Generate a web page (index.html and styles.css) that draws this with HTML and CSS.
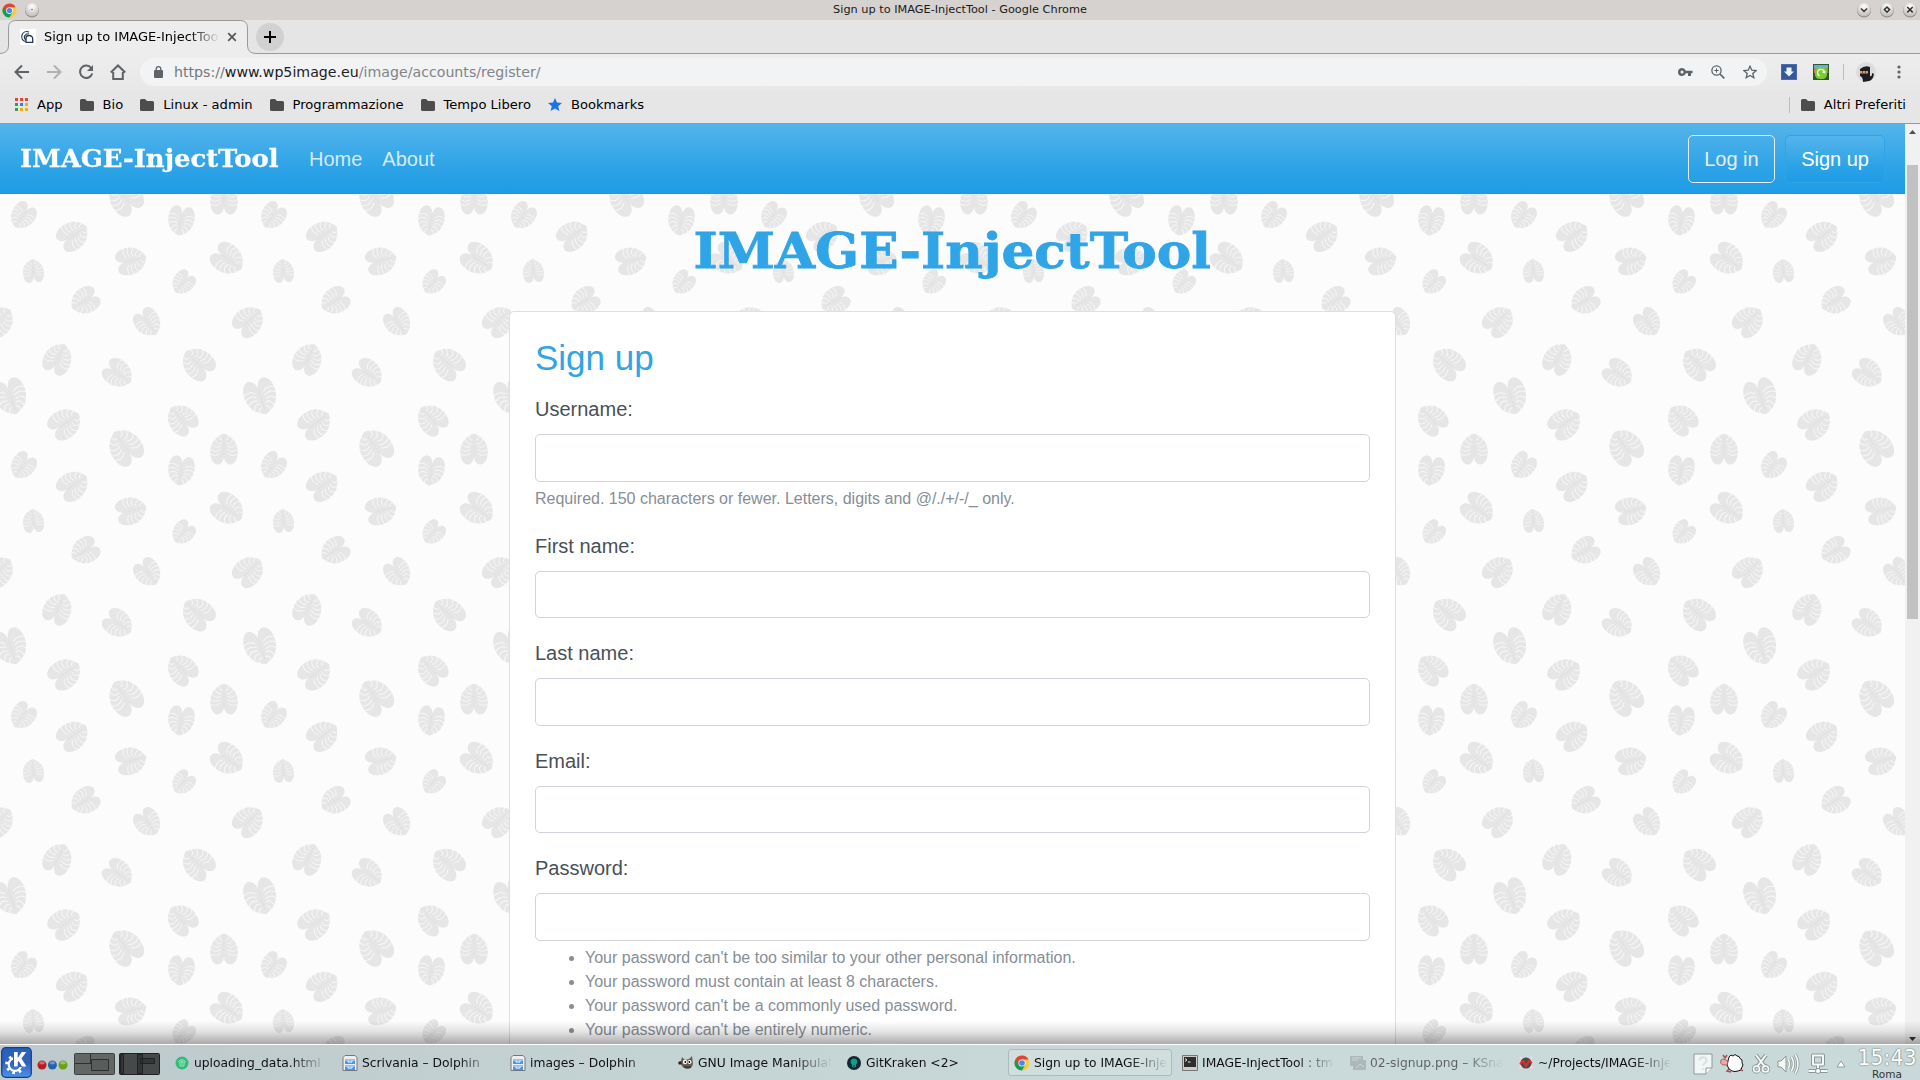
FILE: index.html
```html
<!DOCTYPE html>
<html lang="en">
<head>
<meta charset="utf-8">
<title>Sign up to IMAGE-InjectTool</title>
<link rel="stylesheet" href="styles.css">
</head>
<body>
<svg class="defs" width="0" height="0" aria-hidden="true">
  <defs>
    <symbol id="chrome" viewBox="0 0 16 16">
      <circle cx="8" cy="8" r="7.5" fill="#fbca3e"/>
      <path d="M8 8 1.5 4.25A7.5 7.5 0 0 0 8 15.5L11.2 9.9Z" fill="#169b58"/>
      <path d="M8 8 4.7 9.8 1.5 4.25A7.5 7.5 0 0 1 14.6 4.4H8Z" fill="#e0453a"/>
      <circle cx="8" cy="8" r="3.6" fill="#f4f4f4"/><circle cx="8" cy="8" r="2.8" fill="#4788f0"/>
    </symbol>
    <symbol id="folder" viewBox="0 0 14 12"><path d="M0 1.5Q0 0 1.5 0H5l2 2h5.500Q14 2 14 3.500V10.500Q14 12 12.500 12H1.500Q0 12 0 10.500Z" fill="#4d4d4d"/></symbol>
    <symbol id="cabinet" viewBox="0 0 16 16">
      <path d="M3 .5h10l2 2v13H1v-13Z" fill="#eee" stroke="#777"/>
      <path d="M3 4h10v5H3zM3 10h10v5H3z" fill="#4d95e8"/><path d="M3 4h10v2H3zM3 10h10v2H3z" fill="#8fc2f8"/>
      <path d="M6 5.500v1.500h4V5.500M6 11.500v1.500h4v-1.500" fill="none" stroke="#fff"/>
    </symbol>
    <radialGradient id="knob" cx=".5" cy=".25" r=".8"><stop offset="0" stop-color="#fff"/><stop offset="1" stop-color="#b9b6b3"/></radialGradient>
    <linearGradient id="kde" x2="0" y2="1"><stop offset="0" stop-color="#2a5fb8"/><stop offset=".5" stop-color="#2e62bd"/><stop offset="1" stop-color="#4c93ea"/></linearGradient>
    <symbol id="leaf" viewBox="-17 -17 34 34">
      <path d="M0-7C0-10-1.500-14-5-15.300C-9-16.500-12-13-13.200-9C-15-3-14 3-11 8C-8.500 12-4 14.500 0 16C4 14.500 8.500 12 11 8C14 3 15-3 13.200-9C12-13 9-16.500 5-15.300C1.500-14 0-10 0-7Z" fill="#e6e6e6"/>
      <g fill="none" stroke="#f8f8f8" stroke-width=".9" stroke-linecap="round">
        <path d="M-14-5Q-8-8-4-4M-14 0Q-9-4-4-.5M-12.500 5.500Q-9 0-4 3M-9 10.500Q-7 4-3 6M-5 14Q-5 9-2 9.500M14-5Q8-8 4-4M14 0Q9-4 4-.5M12.500 5.500Q9 0 4 3M9 10.500Q7 4 3 6M5 14Q5 9 2 9.500"/>
      </g>
      <path d="M0-7V12" stroke="#dedede" stroke-width=".7"/>
    </symbol>
    <pattern id="leaves" width="250" height="250" patternUnits="userSpaceOnUse">
      <use href="#leaf" x="-17" y="-17" width="34" height="34" transform="translate(22.700 22) rotate(35) scale(.86)"/>
      <use href="#leaf" x="-17" y="-17" width="34" height="34" transform="translate(73.300 41.300) rotate(-125) scale(1)"/>
      <use href="#leaf" x="-17" y="-17" width="34" height="34" transform="translate(125 252.700) rotate(145) scale(1.150)"/>
      <use href="#leaf" x="-17" y="-17" width="34" height="34" transform="translate(125 2.700) rotate(145) scale(1.150)"/>
      <use href="#leaf" x="-17" y="-17" width="34" height="34" transform="translate(181 26.700) rotate(10) scale(.94)"/>
      <use href="#leaf" x="-17" y="-17" width="34" height="34" transform="translate(224 255.300) rotate(180) scale(.98)"/>
      <use href="#leaf" x="-17" y="-17" width="34" height="34" transform="translate(224 5.300) rotate(180) scale(.98)"/>
      <use href="#leaf" x="-17" y="-17" width="34" height="34" transform="translate(33.300 77) rotate(175) scale(.75)"/>
      <use href="#leaf" x="-17" y="-17" width="34" height="34" transform="translate(131.300 66.700) rotate(-105) scale(.97)"/>
      <use href="#leaf" x="-17" y="-17" width="34" height="34" transform="translate(228 65.300) rotate(-55) scale(1.050)"/>
      <use href="#leaf" x="-17" y="-17" width="34" height="34" transform="translate(183 88.700) rotate(40) scale(.77)"/>
      <use href="#leaf" x="-17" y="-17" width="34" height="34" transform="translate(84.700 107) rotate(60) scale(.92)"/>
      <use href="#leaf" x="-17" y="-17" width="34" height="34" transform="translate(148 128.700) rotate(-35) scale(.9)"/>
      <use href="#leaf" x="-17" y="-17" width="34" height="34" transform="translate(249 127) rotate(-135) scale(1)"/>
      <use href="#leaf" x="-17" y="-17" width="34" height="34" transform="translate(-1 127) rotate(-135) scale(1)"/>
      <use href="#leaf" x="-17" y="-17" width="34" height="34" transform="translate(58 164.700) rotate(-155) scale(.99)"/>
      <use href="#leaf" x="-17" y="-17" width="34" height="34" transform="translate(118.300 179.700) rotate(-55) scale(.95)"/>
      <use href="#leaf" x="-17" y="-17" width="34" height="34" transform="translate(197.700 169.300) rotate(133) scale(1.060)"/>
      <use href="#leaf" x="-17" y="-17" width="34" height="34" transform="translate(260.700 202.700) rotate(-18) scale(1.140)"/>
      <use href="#leaf" x="-17" y="-17" width="34" height="34" transform="translate(10.700 202.700) rotate(-18) scale(1.140)"/>
      <use href="#leaf" x="-17" y="-17" width="34" height="34" transform="translate(65.300 229.300) rotate(-125) scale(1.040)"/>
      <use href="#leaf" x="-17" y="-17" width="34" height="34" transform="translate(181.700 225.300) rotate(138) scale(1)"/>
    </pattern>
  </defs>
</svg>

<header class="titlebar">
  <div class="title-icons">
    <svg width="15" height="15"><use href="#chrome"/></svg>
    <svg width="16" height="16" viewBox="0 0 16 16"><circle cx="8" cy="8.500" r="7" fill="#8c8987"/><circle cx="8" cy="7.800" r="6.800" fill="url(#knob)"/><circle cx="8" cy="7.500" r=".8" fill="#777"/></svg>
  </div>
  <span class="window-title">Sign up to IMAGE-InjectTool - Google Chrome</span>
  <div class="window-buttons">
    <svg width="16" height="16" viewBox="0 0 16 16"><circle cx="8" cy="8.500" r="7" fill="#8c8987"/><circle cx="8" cy="7.800" r="6.800" fill="url(#knob)"/><path d="m5 6.500 3 3 3-3" class="glyph"/></svg>
    <svg width="16" height="16" viewBox="0 0 16 16"><circle cx="8" cy="8.500" r="7" fill="#8c8987"/><circle cx="8" cy="7.800" r="6.800" fill="url(#knob)"/><path d="m8 5 2.600 2.600L8 10.200 5.400 7.600Z" class="glyph"/></svg>
    <svg width="16" height="16" viewBox="0 0 16 16"><circle cx="8" cy="8.500" r="7" fill="#8c8987"/><circle cx="8" cy="7.800" r="6.800" fill="url(#knob)"/><path d="m5.300 5 5.400 5.400M10.700 5l-5.400 5.400" class="glyph"/></svg>
  </div>
</header>

<div class="tabstrip">
  <svg class="tab-shape" width="1920" height="34" viewBox="0 0 1920 34"><path d="M0 33.500Q8.500 33 8.500 26V8Q8.500 .5 16 .5H240Q247.500 .5 247.500 8V26Q248 33.500 256 33.500H1920V35H0Z" fill="#ededed" stroke="#9a9a9a"/></svg>
  <div class="tab">
    <svg width="16" height="16" viewBox="0 0 16 16"><path fill="#fff" d="M0 0h16v16H0z"/><g fill="none" stroke="#26365a"><path d="M5.500 12.500C2.500 12 1 9 2 6 3 3 6 2 9 3M6 11C2.500 8 5 4.500 9 4.800" stroke-width="1.100"/><path d="M6 13.300V9Q6 6.500 9 6.500 12.700 6.500 12.700 10V13.300Z" stroke-width="1.300"/></g></svg>
    <span class="tab-text">Sign up to IMAGE-InjectTool</span>
    <svg width="10" height="10" viewBox="0 0 10 10"><path d="m1.200 1.200 7.600 7.600M8.800 1.200 1.200 8.800" stroke="#555" stroke-width="1.700"/></svg>
  </div>
  <div class="newtab"><svg width="12" height="12" viewBox="0 0 12 12"><path d="M6 0v12M0 6h12" stroke="#000" stroke-width="2"/></svg></div>
</div>

<div class="toolbar">
  <div class="nav-icons">
    <svg width="16" height="16" viewBox="0 0 16 16" class="line"><path d="M15 8H2M8 1.500 1.500 8 8 14.500"/></svg>
    <svg width="16" height="16" viewBox="0 0 16 16" class="line dim"><path d="M1 8H14M8 1.500 14.500 8 8 14.500"/></svg>
    <svg width="16" height="16" viewBox="0 0 16 16" class="line"><path d="M13.200 4A6.200 6.200 0 1 0 14.200 9.500"/><path d="M15 1v6H9Z" fill="#5f6368" stroke="none"/></svg>
    <svg width="16" height="16" viewBox="0 0 16 16" class="line"><path d="M.8 8.500 8 1.500l7.200 7M3.200 8v7h9.600V8"/></svg>
  </div>
  <div class="omnibox">
    <svg width="9" height="12" viewBox="0 0 9 12"><path d="M2.200 5V3a2.300 2.300 0 0 1 4.600 0v2" fill="none" stroke="#5f6368" stroke-width="1.300"/><rect y="4" width="9" height="8" rx="1" fill="#5f6368"/></svg>
    <span class="url"><span>https://</span><b>www.wp5image.eu</b><i>/image/accounts/register/</i></span>
    <div class="omni-icons">
      <svg width="15" height="10" viewBox="0 0 15 10"><path d="M4 1a4 4 0 1 0 3.800 5.300H10V9h3V6.300h1.500V3.700H7.800A4 4 0 0 0 4 1Zm0 2.500a1.500 1.500 0 1 1 0 3 1.500 1.500 0 0 1 0-3Z" fill="#5f6368" fill-rule="evenodd"/></svg>
      <svg width="14" height="14" viewBox="0 0 14 14" fill="none" stroke="#5f6368" stroke-width="1.300"><circle cx="5.500" cy="5.500" r="4.600"/><path d="M9 9l4.300 4.300" stroke-width="1.700"/><path d="M5.500 3.300v4.400M3.300 5.500h4.400" stroke-width="1"/></svg>
      <svg width="14" height="14" viewBox="0 0 14 14"><path d="m7 1.200 1.800 4 4.300.4-3.300 2.900 1 4.200L7 10.500l-3.800 2.200 1-4.200L.9 5.600l4.300-.4Z" fill="none" stroke="#5f6368" stroke-width="1.300"/></svg>
    </div>
  </div>
  <div class="extensions">
    <svg width="16" height="16" viewBox="0 0 16 16"><rect x=".5" y=".5" width="15" height="15" fill="#35589b" stroke="#4b6cab"/><path d="M5.500 3.500h5v4H13l-5 5-5-5h2.500Z" fill="#eef2f9"/></svg>
    <svg width="16" height="16" viewBox="0 0 16 16"><rect width="16" height="16" fill="#2c5a29"/><path fill="#5fb3e0" d="M1 1h14v3H1z"/><path fill="#bf7860" d="M1 4h4v5H1zM11 4h4v5h-4z"/><rect x="2" y="3" width="12" height="12" rx="4.500" fill="#7ccb32"/><path d="M6.500 12A3.500 3.500 0 1 1 11.500 8.500L9.500 8M11.500 8.500 12 6.800" fill="none" stroke="#e9ffd7" stroke-width="1.500"/></svg>
  </div>
  <span class="rule"></span>
  <svg class="avatar" width="20" height="20" viewBox="0 0 20 20"><circle cx="10" cy="10" r="10" fill="#dcdcdc"/><path d="M4 7Q9 3 14 5V14Q16 15 16 11L18 12Q17 18 13 19L7 20Q7 15 4 14Z" fill="#1c1d20"/><path d="M4 9h8v2.500H4z" fill="#d99a6c"/><path d="M6 10h1M9 10h1" stroke="#111"/></svg>
  <svg class="menu" width="4" height="14" viewBox="0 0 4 14" fill="#5f6368"><circle cx="2" cy="2" r="1.600"/><circle cx="2" cy="7" r="1.600"/><circle cx="2" cy="12" r="1.600"/></svg>
</div>

<nav class="bookmarks">
  <span class="bm app"><svg width="13" height="13" viewBox="0 0 13 13"><path d="M0 0h3v3H0zM5 0h3v3H5zM10 0h3v3h-3z" fill="#ea4335"/><path d="M0 5h3v3H0zM0 10h3v3H0z" fill="#349d55"/><path d="M5 5h3v3H5z" fill="#2385f5"/><path d="M10 5h3v3h-3zM5 10h3v3H5zM10 10h3v3h-3z" fill="#f5ad0c"/></svg>App</span>
  <span class="bm"><svg width="14" height="12"><use href="#folder"/></svg>Bio</span>
  <span class="bm"><svg width="14" height="12"><use href="#folder"/></svg>Linux - admin</span>
  <span class="bm"><svg width="14" height="12"><use href="#folder"/></svg>Programmazione</span>
  <span class="bm"><svg width="14" height="12"><use href="#folder"/></svg>Tempo Libero</span>
  <span class="bm"><svg width="14" height="13" viewBox="0 0 14 13"><path d="m7 0 2 4.600 5 .4-3.800 3.300L11.400 13 7 10.500 2.600 13l1.200-4.700L0 5l5-.4Z" fill="#1a73e8"/></svg>Bookmarks</span>
  <span class="rule other"></span>
  <span class="bm"><svg width="14" height="12"><use href="#folder"/></svg>Altri Preferiti</span>
</nav>

<div class="viewport">
  <main class="page">
    <div class="navbar">
      <span class="brand"><span>IMAGE-InjectTool</span></span>
      <a class="nav-link">Home</a>
      <a class="nav-link">About</a>
      <a class="btn btn-outline">Log in</a>
      <a class="btn btn-primary">Sign up</a>
    </div>
    <div class="content">
      <svg class="backdrop" width="100%" height="100%" aria-hidden="true"><rect width="100%" height="100%" fill="url(#leaves)"/></svg>
      <h1 class="site-title"><span>IMAGE-InjectTool</span></h1>
      <form class="card">
        <h2>Sign up</h2>
        <div class="group"><label for="u">Username:</label><input id="u"><small>Required. 150 characters or fewer. Letters, digits and @/./+/-/_ only.</small></div>
        <div class="group"><label for="f">First name:</label><input id="f"></div>
        <div class="group"><label for="l">Last name:</label><input id="l"></div>
        <div class="group"><label for="e">Email:</label><input id="e"></div>
        <div class="group"><label for="p">Password:</label><input id="p">
          <ul>
            <li>Your password can't be too similar to your other personal information.</li>
            <li>Your password must contain at least 8 characters.</li>
            <li>Your password can't be a commonly used password.</li>
            <li>Your password can't be entirely numeric.</li>
          </ul>
        </div>
      </form>
    </div>
  </main>
  <aside class="scrollbar">
    <svg width="7" height="4" viewBox="0 0 7 4"><path d="M0 4 3.500 0 7 4Z" fill="#505050"/></svg>
    <span class="thumb"></span>
    <svg class="down" width="7" height="4" viewBox="0 0 7 4"><path d="M0 0h7L3.500 4Z" fill="#333"/></svg>
  </aside>
  <div class="panel-shadow"></div>
</div>

<footer class="taskbar">
  <svg class="kmenu" width="31" height="31" viewBox="0 0 31 31"><rect x=".7" y=".7" width="29.600" height="29.600" rx="4" fill="url(#kde)" stroke="#163c86" stroke-width="1.200"/><circle cx="14" cy="17.500" r="8.300" fill="none" stroke="#fff" stroke-width="3" stroke-dasharray="2.600 3.920"/><circle cx="14" cy="17.500" r="6.300" fill="none" stroke="#fff" stroke-width="2.200"/><path d="M12 4h14v16H12z" fill="#2e62bd"/><path d="M13 5h3.700v6l4-6h4.500l-4.700 6.500 5 8h-4.600l-3.200-5.500-1 1.300v4.200H13Z" fill="#fff"/></svg>
  <svg class="dots" width="31" height="10" viewBox="0 0 31 10"><circle cx="5" cy="5" r="4.500" fill="#b91f22"/><circle cx="15.400" cy="5" r="4.500" fill="#2561ae"/><circle cx="26" cy="5" r="4.500" fill="#69a11b"/><g fill="#fff" opacity=".35"><ellipse cx="5" cy="2.800" rx="2.800" ry="1.600"/><ellipse cx="15.400" cy="2.800" rx="2.800" ry="1.600"/><ellipse cx="26" cy="2.800" rx="2.800" ry="1.600"/></g></svg>
  <svg class="pager" width="86" height="22" viewBox="0 0 86 22"><g stroke="#3c403f"><rect x=".5" y=".5" width="40" height="21" rx="1" fill="#626766"/><path d="M1 10.500h16M16.500 1v9.500M17.500 6.500h17v11h-17Z" fill="#585d5c" stroke="#2d3030"/></g><g stroke="#202222"><rect x="45.500" y=".5" width="40" height="21" rx="1" fill="#464949"/><path d="M46.500 1.500h3v19h-3zM63.500 1.500h5v19h-5zM66.500 5.500h14v5h-14z" fill="#333636"/></g></svg>
  <div class="tasks">
    <div class="task"><svg width="16" height="16" viewBox="0 0 16 16"><circle cx="8" cy="8" r="6.500" fill="#32bb79"/><path d="M4.500 6.500Q8 3 11.500 6.500L10 8v3H6V8ZM6 7h4M8 5v5" fill="none" stroke="#a5e3c2"/></svg><span>uploading_data.html</span></div>
    <div class="task"><svg width="16" height="16"><use href="#cabinet"/></svg><span>Scrivania – Dolphin</span></div>
    <div class="task"><svg width="16" height="16"><use href="#cabinet"/></svg><span>images – Dolphin</span></div>
    <div class="task"><svg width="16" height="16" viewBox="0 0 16 16"><path d="M3 6 4 2l3 3 4-1 3-3 1 8Q14 14 9 14 4 13 3 9L0 8Z" fill="#675e51"/><circle cx="7" cy="7" r="2.200" fill="#fff"/><circle cx="11.500" cy="7" r="2" fill="#fff"/><circle cx="7.300" cy="7" r=".9"/><circle cx="11.300" cy="7" r=".9"/><path d="M6 12h7" stroke="#3b332c" stroke-width="1.500"/><circle cx="2" cy="8" r="1.700" fill="#262626"/></svg><span>GNU Image Manipulation</span></div>
    <div class="task"><svg width="16" height="16" viewBox="0 0 16 16"><circle cx="8" cy="8" r="7" fill="#142832"/><path d="M8 3.500c3 0 4 3 3 5l-1 .8V12H9V10H8.500v3h-1v-3H7v2H6V9.300l-1-.8c-1-2 0-5 3-5Z" fill="#149b8f"/></svg><span>GitKraken &lt;2&gt;</span></div>
    <div class="task active"><svg width="16" height="16"><use href="#chrome"/></svg><span>Sign up to IMAGE-InjectTool</span></div>
    <div class="task"><svg width="16" height="16" viewBox="0 0 16 16"><path d="M.5.5h15v15H.5z" fill="#ccc" stroke="#777"/><path d="M2 2h12v10H2z" fill="#2e2e2e"/><path d="m3 3.500 2 1.500-2 1.500M6 7h2.500" fill="none" stroke="#eee"/></svg><span>IMAGE-InjectTool : tmux</span></div>
    <div class="task faded"><svg width="16" height="16" viewBox="0 0 16 16"><path d="M0 1h13v4h3v10H3v-4H0Z" fill="#9aa4a4"/><path d="M2 3h9M2 5h6M6 13l4-4 4 3" fill="none" stroke="#cbd5d5"/></svg><span>02-signup.png – KSnapshot</span></div>
    <div class="task"><svg width="16" height="16" viewBox="0 0 16 16"><path d="m2 2 3 3M14 2l-3 3M1 13l3-2M15 13l-3-2" stroke="#f3dada" stroke-width="2"/><circle cx="8" cy="8" r="5.500" fill="#4b4b4b"/><path d="m2 9 3-3 3 5 3-5 3 2" fill="none" stroke="#e52a2e" stroke-width="2"/></svg><span>~/Projects/IMAGE-InjectTool</span></div>
  </div>
  <div class="tray">
    <svg width="20" height="24" viewBox="0 0 20 24"><path d="M1 2h18v14l-6 6H1Z" fill="#f3f6f6" stroke="#8f9a9a"/><path d="M19 16h-6v6" fill="#fff" stroke="#8f9a9a"/><path d="M6.500 8.500c0-4 7-4 7 0 0 3-3.500 2.500-3.500 5.500M10 16v2" fill="none" stroke="#dde3e3" stroke-width="2.300"/></svg>
    <svg width="25" height="20" viewBox="0 0 25 20"><path d="m9 3 2-2 2 1 2-1.500L17 2l2 .5 1 2 2 1.500v3l1 2-1 2-1 3-3 1-3 .5-3-.5-3-2-2-4Z" fill="#fff" stroke="#111" stroke-width="1"/><path d="m1 6 2-1 3 1 2 2-1 3H3L.5 9Z" fill="#efaaa5" stroke="#8e3f3f" stroke-width=".7"/><path d="M3 1 5 4 7 1M9 15l-2 2 4 1M20 15l3 2" fill="none" stroke="#ae4e4d" stroke-width="1.500"/></svg>
    <svg width="18" height="21" viewBox="0 0 18 21"><g fill="none"><path d="M4 2 13 14M14 2 5 14" stroke="#8b9797" stroke-width="4"/><circle cx="4.500" cy="16" r="3" stroke="#8b9797" stroke-width="3.500"/><circle cx="13.500" cy="16" r="3" stroke="#8b9797" stroke-width="3.500"/><path d="M4 2 13 14M14 2 5 14" stroke="#f7f9f9" stroke-width="2"/><circle cx="4.500" cy="16" r="3" stroke="#f7f9f9" stroke-width="1.700"/><circle cx="13.500" cy="16" r="3" stroke="#f7f9f9" stroke-width="1.700"/></g></svg>
    <svg width="23" height="24" viewBox="0 0 23 24"><path d="M1 9h3l5-5v16l-5-5H1Z" fill="#f8fafa" stroke="#8b9797"/><g fill="none"><path d="M11.500 8q2 4 0 8M14.500 5q4 7 0 14M18 2q6 10 0 20" stroke="#8b9797" stroke-width="3.200"/><path d="M11.500 8q2 4 0 8M14.500 5q4 7 0 14M18 2q6 10 0 20" stroke="#f7f9f9" stroke-width="1.600"/></g></svg>
    <svg width="22" height="22" viewBox="0 0 22 22"><g fill="none" stroke-linejoin="round"><path d="M6 2.500h10v9H6ZM11 12v5M1.500 18h19" stroke="#8b9797" stroke-width="4"/><path d="M6 2.500h10v9H6ZM11 12v5M1.500 18h19" stroke="#f7f9f9" stroke-width="2"/></g><circle cx="11" cy="18" r="2.500" fill="#fff" stroke="#8b9797"/></svg>
    <svg class="up" width="10" height="8" viewBox="0 0 10 8"><path d="M5 1 9 7H1Z" fill="#fff" stroke="#929e9e"/></svg>
  </div>
  <div class="clock"><span class="time">15:43</span><span class="city">Roma</span></div>
</footer>
</body>
</html>
```
FILE: styles.css
```css
* { box-sizing: border-box; }
body { margin: 0; width: 1920px; height: 1080px; overflow: hidden; display: flex; flex-direction: column; font-family: "DejaVu Sans", sans-serif; background: #e6e6e6; }
svg { display: block; flex: none; }
.defs { position: absolute; }

.titlebar { height: 20px; background: #d6d2cf; display: grid; grid-template-columns: 200px 1fr 200px; align-items: center; padding: 0 2px; }
.title-icons { display: flex; gap: 7px; align-items: center; }
.window-title { text-align: center; font-size: 11.3px; line-height: 20px; color: #1a1a1a; }
.window-buttons { display: flex; justify-content: flex-end; gap: 7px; }
.glyph { fill: none; stroke: #333; stroke-width: 1.5; }

.tabstrip { height: 34px; position: relative; background: #e5e5e5; display: flex; align-items: center; }
.tab-shape { position: absolute; left: 0; top: 0; }
.tab { position: relative; width: 248px; padding: 0 11px 0 20px; display: flex; align-items: center; }
.tab-text { width: 176px; margin: 0 8px 0 8px; padding-bottom: 1px; font-size: 13px; white-space: nowrap; overflow: hidden; -webkit-mask-image: linear-gradient(90deg, #000 145px, transparent 176px); mask-image: linear-gradient(90deg, #000 145px, transparent 176px); }
.newtab { position: relative; width: 28px; height: 28px; margin-left: 8px; border-radius: 50%; background: #d1d1d1; display: grid; place-items: center; }

.toolbar { height: 36px; padding: 0 12px 0 14px; background: linear-gradient(#ededed, #e8e8e8); display: flex; align-items: center; }
.nav-icons { display: flex; gap: 16px; }
.line { fill: none; stroke: #5f6368; stroke-width: 2; }
.dim { stroke: #b0b0b0; }
.omnibox { flex: 1; height: 28px; margin-left: 14px; padding: 0 10px 0 14px; border-radius: 14px; background: #f1f3f4; display: flex; align-items: center; }
.url { margin-left: 11px; font-size: 14.18px; color: #75787b; }
.url b { font-weight: 400; color: #202124; }
.url i { font-style: normal; color: #808488; }
.omni-icons { margin-left: auto; display: flex; align-items: center; gap: 18px; }
.extensions { display: flex; gap: 16px; margin-left: 14px; }
.rule { width: 1px; height: 16px; margin-left: 14px; background: #bdbdbd; }
.avatar { margin: 0 21px 0 12px; }
.menu { margin-right: 7px; }

.bookmarks { height: 34px; padding: 0 14px 4px 15px; border-bottom: 1px solid #999; background: #e6e6e6; display: flex; align-items: center; gap: 17px; font-size: 13.1px; color: #000; }
.bm { display: flex; align-items: center; gap: 9px; white-space: nowrap; }
.app { gap: 9px; }
.other { margin: 0 -6px 0 auto; }

.viewport { height: 921px; position: relative; overflow: hidden; display: flex; }
.page { width: 1905px; font: 20px/1.5 "Liberation Sans", Arial, sans-serif; color: #495057; }
.navbar { height: 70px; padding: 0 20px; display: flex; align-items: center; background: linear-gradient(#54b4eb, #2fa4e7 60%, #1d9ce5); border-bottom: 1px solid #1d9ce5; color: #fff; }
.brand, .site-title { font-family: "DejaVu Serif", serif; font-weight: 700; white-space: nowrap; }
.brand { width: 269px; font-size: 24px; line-height: 30px; }
.brand span, .site-title span { display: inline-block; }
.brand span { transform: scaleX(1.077); transform-origin: 0 50%; -webkit-text-stroke: .3px #fff; }
.nav-link { padding: 0 10px; color: rgba(255, 255, 255, .8); margin-left: 10px; }
.nav-link + .nav-link { margin-left: 0; }
.btn { height: 48px; padding: 8px 15px; border: 1px solid #2fa4e7; border-radius: 5px; }
.btn-outline { margin-left: auto; padding: 8px 15.5px; border-color: #e9ecef; color: #e9ecef; }
.btn-primary { margin-left: 10px; background: linear-gradient(#54b4eb, #2fa4e7 60%, #1d9ce5); }
.content { position: relative; height: 980px; background: #fcfcfc; display: flex; flex-direction: column; align-items: center; }
.backdrop { position: absolute; inset: 0; }
.site-title { position: relative; flex: none; margin: 0; height: 117px; padding-top: 21px; font-size: 49px; line-height: 72px; color: #2fa4e7; }
.site-title span { transform: scaleX(1.055); -webkit-text-stroke: .8px #2fa4e7; }
.card { position: relative; flex: none; width: 887px; height: 1000px; padding: 25px; background: #fff; border: 1px solid #dfdfdf; border-radius: 5px; }
.card h2 { margin: 0 0 15px; font-size: 35px; line-height: 42px; font-weight: 400; color: #2fa4e7; }
.group { margin-bottom: 20px; }
.group label { display: block; height: 30px; margin-bottom: 10px; }
.group input { display: block; width: 100%; height: 47.5px; border: 1px solid #ced4da; border-radius: 5px; background: #fff; }
.group small { display: block; margin-top: 5px; font-size: 16px; line-height: 24px; color: #868e96; }
.group ul { margin: 5px 0 0; padding-left: 50px; font-size: 16px; line-height: 24px; color: #868e96; }

.scrollbar { width: 15px; background: #f1f1f1; padding: 6px 2px 4px; display: flex; flex-direction: column; align-items: center; }
.thumb { width: 11px; height: 454px; margin-top: 31px; background: #c1c1c1; }
.down { margin-top: auto; }
.panel-shadow { position: absolute; left: 0; right: 0; bottom: 0; height: 24px; background: linear-gradient(transparent, rgba(0, 0, 0, .1) 45%, rgba(0, 0, 0, .33)); border-bottom: 1px solid #fff; }

.taskbar { height: 35px; background: linear-gradient(90deg, #bdc9cc, #c4d3d3 35%, #cadada 65%, #c9d9d9); display: flex; align-items: center; color: #111; }
.kmenu { margin-left: 1px; }
.dots { margin: 4px 0 0 5px; }
.pager { margin: 2px 0 0 6px; }
.tasks { width: 1512px; margin-left: 8px; display: grid; grid-template-columns: repeat(9, 168px); }
.task { width: 164px; height: 27px; padding: 0 5px; border: 1px solid transparent; border-radius: 3px; display: flex; align-items: center; gap: 4px; font-size: 12.3px; white-space: nowrap; }
.task span { width: 132px; overflow: hidden; -webkit-mask-image: linear-gradient(90deg, #000 95px, transparent 134px); mask-image: linear-gradient(90deg, #000 95px, transparent 134px); }
.active { background: #d0dedd; border-color: #abbcbc; }
.faded { opacity: .6; }
.tray { margin: 2px 0 0 13px; display: flex; align-items: center; gap: 7px; }
.up { margin-left: 0; }
.clock { margin-left: auto; width: 64px; padding: 1px 2px 0 0; display: flex; flex-direction: column; align-items: center; }
.time { font-size: 20.5px; line-height: 22px; color: #fff; text-shadow: 0 0 2px #6c7777, 0 0 1px #6c7777; }
.city { font-size: 10.5px; line-height: 11px; color: #333; }
```
